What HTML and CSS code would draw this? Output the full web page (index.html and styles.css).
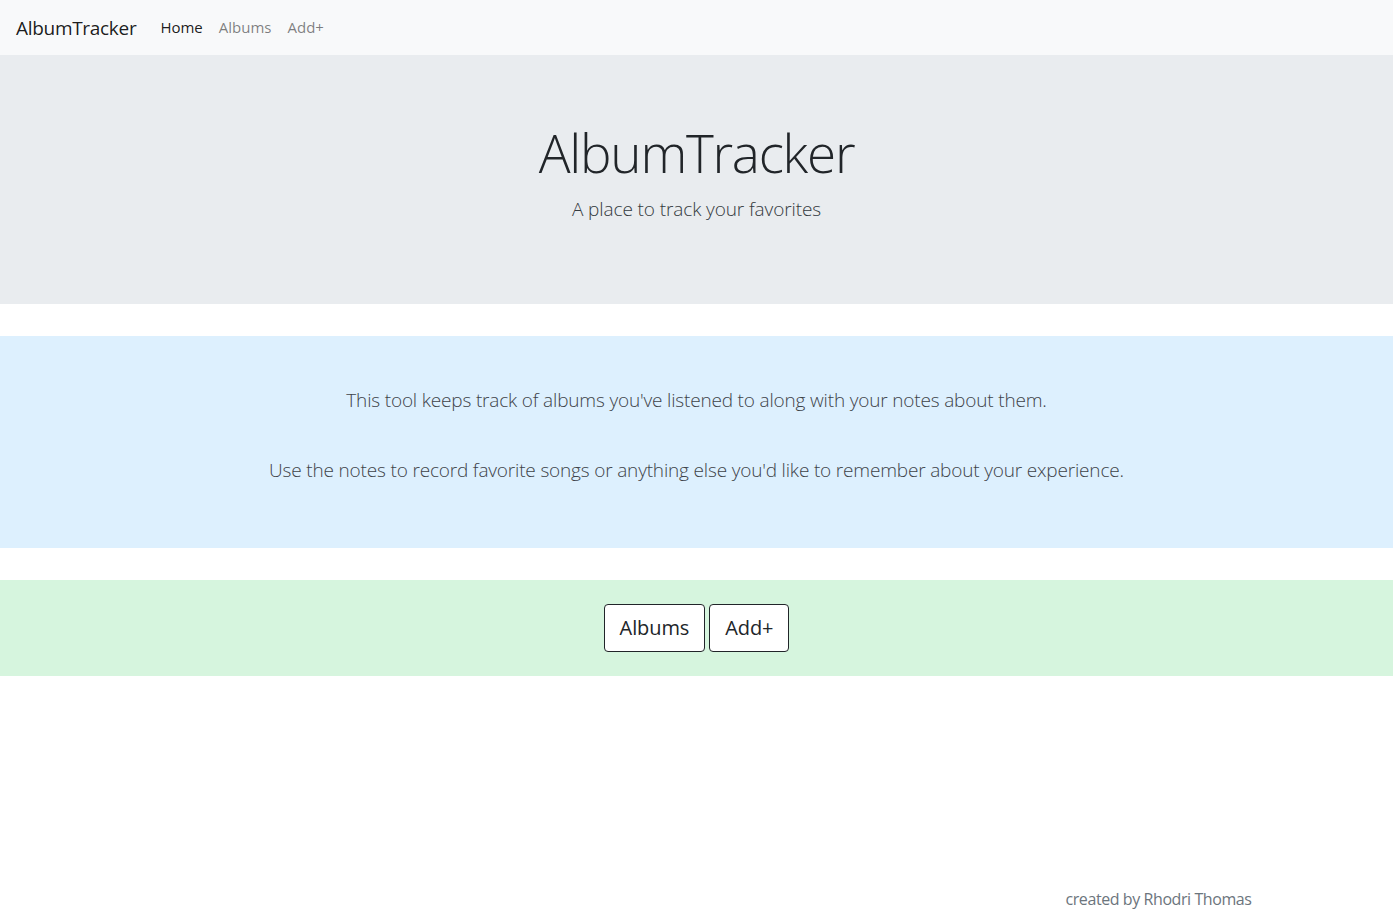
FILE: index.html
```html
<!DOCTYPE html>
<html lang="en">
<head>
<meta charset="utf-8">
<title>AlbumTracker</title>
<link rel="stylesheet" href="styles.css">
</head>
<body>
<nav class="navbar">
  <a class="brand" href="#">AlbumTracker</a>
  <ul class="nav-links">
    <li><a class="nav-link active" href="#">Home</a></li>
    <li><a class="nav-link" href="#">Albums</a></li>
    <li><a class="nav-link" href="#">Add+</a></li>
  </ul>
</nav>
<main class="main">
  <section class="jumbotron">
    <h1 class="display">AlbumTracker</h1>
    <p class="lead">A place to track your favorites</p>
  </section>
  <section class="info">
    <p class="lead info-line">This tool keeps track of albums you've listened to along with your notes about them.</p>
    <p class="lead info-line">Use the notes to record favorite songs or anything else you'd like to remember about your experience.</p>
  </section>
  <section class="actions">
    <a class="btn" href="#">Albums</a>
    <a class="btn" href="#">Add+</a>
  </section>
</main>
<footer class="footer">
  <div class="container footer-inner">created by Rhodri Thomas</div>
</footer>
</body>
</html>
```
FILE: styles.css
```css
* { box-sizing: border-box; }
html, body { height: 100%; }
body {
  margin: 0;
  font-family: "Open Sans", "Noto Sans", "Liberation Sans", sans-serif;
  font-size: 16px;
  line-height: 1.5;
  color: #212529;
  background: #fff;
  display: flex;
  flex-direction: column;
  min-height: 100vh;
}
a { text-decoration: none; }

.navbar {
  display: flex;
  align-items: center;
  background: #f8f9fa;
  padding: 8px 16px;
  height: 55px;
}
.brand {
  font-size: 19px;
  letter-spacing: -0.3px;
  line-height: 30px;
  color: rgba(0,0,0,.9);
  margin-right: 16px;
  padding: 4px 0;
}
.nav-links {
  display: flex;
  list-style: none;
  margin: 0;
  padding: 0;
}
.nav-link {
  display: block;
  padding: 8px 8px;
  font-size: 15px;
  color: rgba(0,0,0,.5);
}
.nav-link.active { color: rgba(0,0,0,.9); }

.jumbotron {
  background: #e9ecef;
  padding: 64px 32px;
  margin-bottom: 32px;
  text-align: center;
}
.display {
  font-size: 53px;
  letter-spacing: -1.25px;
  font-weight: 300;
  line-height: 67px;
  margin: 0 0 8px;
}
.lead {
  font-size: 19px;
  font-weight: 300;
  line-height: 30px;
  margin: 0 0 16px;
}
.jumbotron .lead { color: #343a40; letter-spacing: -0.1px; }

.info {
  background: #ddf0fe;
  padding: 49px 16px 47px;
  margin-bottom: 32px;
  text-align: center;
  display: flex;
  flex-direction: column;
  gap: 24px;
}
.info-line { color: #3d4349; letter-spacing: -0.17px; }

.actions {
  background: #d6f5de;
  padding: 24px 16px;
  display: flex;
  justify-content: center;
  gap: 4px;
}
.btn {
  display: inline-block;
  font-size: 20px;
  letter-spacing: -0.1px;
  line-height: 30px;
  padding: 8px 15px;
  background: #fff;
  color: #212529;
  border: 1px solid #212529;
  border-radius: 4px;
}

.footer { margin-top: auto; padding-bottom: 7px; }
.container {
  max-width: 1140px;
  margin: 0 auto;
  padding: 0 15px;
}
.footer-inner {
  text-align: right;
  color: #6c757d;
  line-height: 24px;
  letter-spacing: -0.42px;
}
```
